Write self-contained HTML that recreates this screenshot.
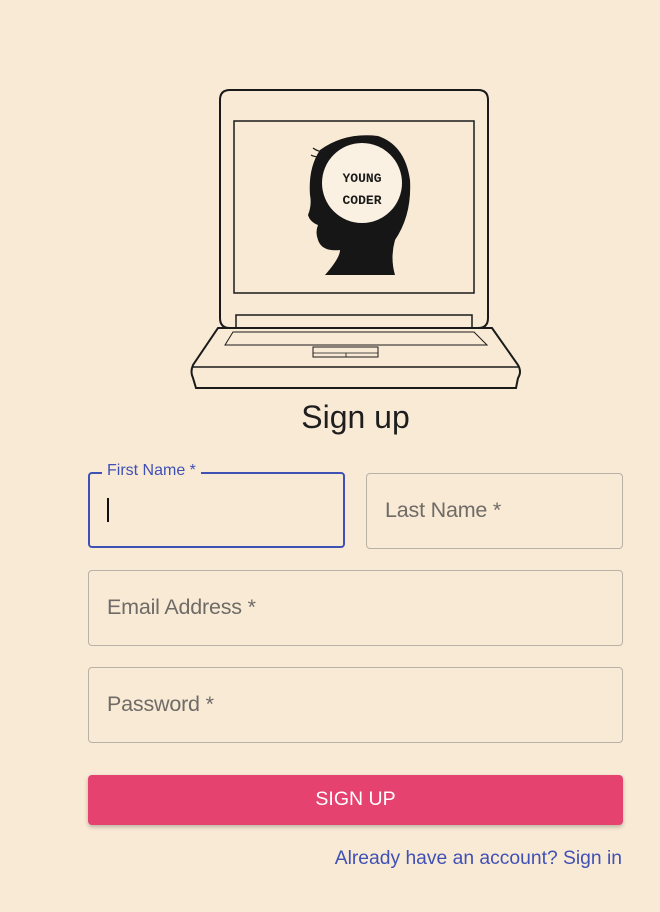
<!DOCTYPE html>
<html><head><style>
body{margin:0;width:660px;height:912px;background:#f9ead6;font-family:"Liberation Sans",sans-serif;position:relative;overflow:hidden}
.f{position:absolute;border:1px solid #b9b0a6;border-radius:4px;box-sizing:border-box;height:76px}
.f span{position:absolute;left:18px;top:24px;font-size:21.5px;color:#6f6b66;letter-spacing:-0.2px}
</style></head><body>
<svg width="660" height="400" style="position:absolute;left:0;top:0" fill="none" stroke="#1a1a1a" stroke-width="2">
<path d="M230 90 H478 Q488 90 488 100 V318 Q488 328 478 328 H230 Q220 328 220 318 V100 Q220 90 230 90Z"/>
<rect x="234" y="121" width="240" height="172" stroke-width="1.5"/>
<rect x="236" y="315" width="236" height="13" stroke-width="1.5"/>
<path d="M218 328 H492 L518 365 Q522 372 518 378 L516 388 H196 L193 378 Q190 372 193 365 Z"/>
<path d="M193 367 H518" stroke-width="1.5"/>
<path d="M225 345 L233 332 H474 L487 345 Z" stroke-width="1"/>
<rect x="313" y="347" width="65" height="10" stroke-width="1"/>
<path d="M313 353 H378 M346 353 V357" stroke-width="0.8"/>
<path fill="#161616" stroke="none" d="M320 150 Q345 132 378 136 Q405 145 410 180 Q412 215 395 240 Q390 258 395 275 H325 Q340 258 340 250 Q322 252 318 240 Q315 232 318 225 Q310 222 308 215 Q312 205 310 195 Q308 168 320 150Z"/>
<path d="M326 152 Q318 152 313 148 M324 156 Q316 158 311 155" stroke-width="1.2"/>
<circle cx="362" cy="183" r="40" fill="#fbf1e3" stroke="none"/>
<text x="362" y="182" text-anchor="middle" font-family="Liberation Mono,monospace" font-weight="bold" font-size="13" fill="#1a1a1a" stroke="none">YOUNG</text>
<text x="362" y="204" text-anchor="middle" font-family="Liberation Mono,monospace" font-weight="bold" font-size="13" fill="#1a1a1a" stroke="none">CODER</text>
</svg>
<div style="position:absolute;left:88px;width:535px;top:399px;text-align:center;font-size:32px;color:#1e1e1e">Sign up</div>
<div class="f" style="left:88px;top:472px;width:257px;border:2px solid #3f51b5"></div>
<div style="position:absolute;left:102px;top:462px;background:#f9ead6;padding:0 5px;font-size:16px;color:#3f51b5">First Name *</div>
<div style="position:absolute;left:107px;top:498px;width:2px;height:24px;background:#111"></div>
<div class="f" style="left:366px;top:473px;width:257px"><span>Last Name *</span></div>
<div class="f" style="left:88px;top:570px;width:535px"><span>Email Address *</span></div>
<div class="f" style="left:88px;top:667px;width:535px"><span>Password *</span></div>
<div style="position:absolute;left:88px;top:775px;width:535px;height:50px;background:#e64270;border-radius:4px;box-shadow:0 2px 4px rgba(0,0,0,.25);color:#fff;font-size:19.5px;text-align:center;line-height:49px">SIGN UP</div>
<div style="position:absolute;right:38px;top:848px;font-size:19.3px;color:#3f51b5">Already have an account? Sign in</div>
</body></html>
